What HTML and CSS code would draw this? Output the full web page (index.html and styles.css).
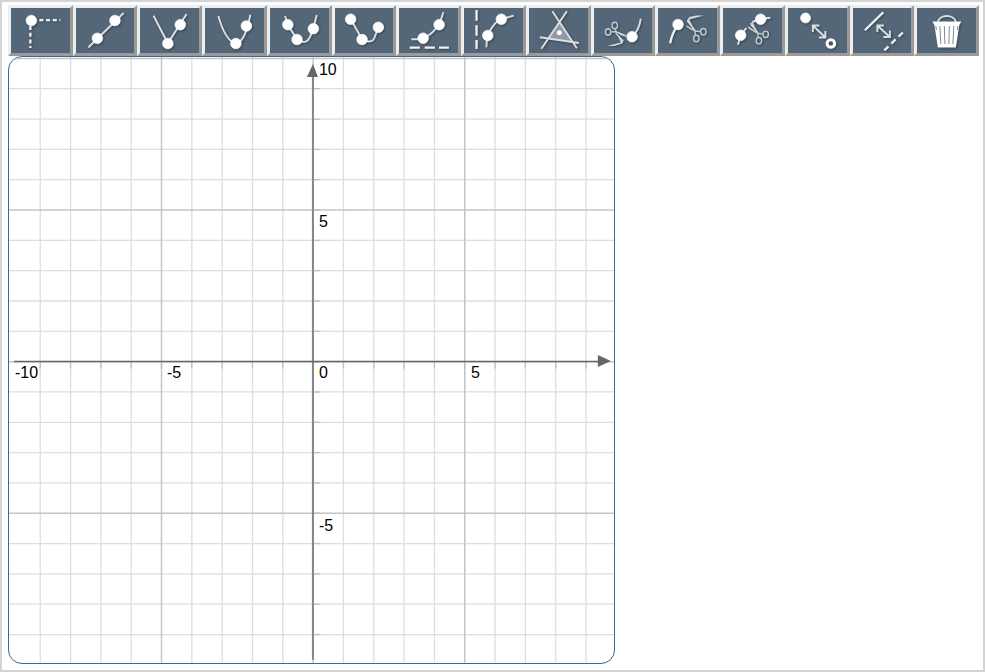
FILE: index.html
```
<!DOCTYPE html>
<html lang="en">
<head>
  <meta charset="UTF-8">
  <meta name="viewport" content="width=device-width, initial-scale=1.0">
  <title>Graph</title>
  <link rel="stylesheet" href="styles.css">
</head>
<body>
  <main class="frame">
    <div class="toolbar">
      <button type="button" aria-label="Point">
        <svg viewBox="0 0 58 45"><path class="thick" d="M28 12.2H49M19 18V40" stroke-dasharray="4 2.7"/><circle cx="20" cy="12.5" r="5.3"/></svg>
      </button>
      <button type="button" aria-label="Line">
        <svg viewBox="0 0 58 45"><path d="M12 39.5L47.3 5"/><circle cx="38.6" cy="12.5" r="5.3"/><circle cx="21" cy="30.3" r="5.3"/></svg>
      </button>
      <button type="button" aria-label="Absolute value">
        <svg viewBox="0 0 58 45"><path d="M13.2 7.7L27.5 35.3L46.2 6"/><circle cx="27.5" cy="35.5" r="5.3"/><circle cx="39.9" cy="16.7" r="5.3"/></svg>
      </button>
      <button type="button" aria-label="Parabola">
        <svg viewBox="0 0 58 45"><path d="M13 8C17 22 23 34 30.5 35.3C37 35 42 22 45 6.7"/><circle cx="30.5" cy="35.5" r="5.3"/><circle cx="41" cy="18" r="5.3"/></svg>
      </button>
      <button type="button" aria-label="Three point curve">
        <svg viewBox="0 0 58 45"><path d="M14.7 8L17.5 17L26.7 31.3C32 35 37 35 39 30C42 25 44 17 46.4 7"/><circle cx="17.5" cy="16.7" r="5.3"/><circle cx="26.7" cy="31.5" r="5.3"/><circle cx="43" cy="20.7" r="5.3"/></svg>
      </button>
      <button type="button" aria-label="Curve segment">
        <svg viewBox="0 0 58 45"><path d="M15.3 11L26.7 31.3C32 34 37 35 39 30L43 19.3"/><circle cx="15.3" cy="11.2" r="5.3"/><circle cx="26.7" cy="31.5" r="5.3"/><circle cx="43" cy="19.3" r="5.3"/></svg>
      </button>
      <button type="button" aria-label="Horizontal asymptote">
        <svg viewBox="0 0 58 45"><path d="M12 31.3H19L24 30C32 27 40 19 44 4.3"/><path class="thick" d="M10.3 39.7H20.6M25.3 39.7H35.6M39.6 39.7H49.6"/><circle cx="23.8" cy="30.2" r="5.3"/><circle cx="39.8" cy="16.7" r="5.3"/></svg>
      </button>
      <button type="button" aria-label="Vertical asymptote">
        <svg viewBox="0 0 58 45"><path d="M22 39.3C22 25 29 15 37 11L49.5 7.7"/><path class="thick" d="M12.2 2V12.7M12.2 17.3V27.7M12.2 32V41"/><circle cx="37" cy="11.2" r="5.3"/><circle cx="23.4" cy="27.5" r="5.3"/></svg>
      </button>
      <button type="button" aria-label="Shaded region">
        <svg viewBox="0 0 58 45"><path class="shade" d="M30 14L19 30.5L43 34Z"/><path d="M37.5 3.3L12 40.7M23 3.3L47.5 40.3M10.5 29.3L49.5 35"/><circle cx="30" cy="24.7" r="2.2"/></svg>
      </button>
      <button type="button" aria-label="Cut left">
        <svg viewBox="0 0 58 45"><path d="M37.7 28.7C42 25 45 20 46.4 10.7"/><circle cx="37.7" cy="28.7" r="5.3"/>
          <g class="scissors"><ellipse cx="13.7" cy="24" rx="2.7" ry="3.2"/><ellipse cx="20.4" cy="17.5" rx="2.7" ry="3.2"/><path d="M17 24L21 23.5L32 28M21 21L22 26L29 33"/><path class="blade" d="M21.5 23L28 26L32 29L26 27ZM22 25L29 33L28 35.5L20 38L12.5 38L26.5 34.5Z"/></g></svg>
      </button>
      <button type="button" aria-label="Cut right">
        <svg viewBox="0 0 58 45"><path class="thick" d="M19.7 16.3C15 23 13 29 11.7 35.3"/><circle cx="19.7" cy="16.5" r="5.3"/>
          <g class="scissors"><ellipse cx="38" cy="30.5" rx="2.7" ry="3.2"/><ellipse cx="45" cy="23.7" rx="2.7" ry="3.2"/><path d="M37 27L36.5 22L29 13M41.5 23.5L37 23L28 18"/><path class="blade" d="M37 24L35 22L28.5 12.5L31 9L38 7.5H45.5L31 11.5ZM36 24L30 20L28 17.5Z"/></g></svg>
      </button>
      <button type="button" aria-label="Cut middle">
        <svg viewBox="0 0 58 45"><path d="M14.6 36.7L17.3 27.3L23 20M29 14L37.3 11L47 9.7"/><circle cx="37.3" cy="11.2" r="5.3"/><circle cx="17.3" cy="27.3" r="5.3"/>
          <g class="scissors"><ellipse cx="35.5" cy="32.7" rx="2.7" ry="3.2"/><ellipse cx="42.3" cy="26.3" rx="2.7" ry="3.2"/><path d="M35 29L34 24L27 15M39 26L34 25L25 19"/><path class="blade" d="M35 26L27 17L29 13.5ZM34 26L26 21L24 18Z"/></g></svg>
      </button>
      <button type="button" aria-label="Open or closed point">
        <svg viewBox="0 0 58 45"><circle cx="17.2" cy="10" r="5"/><path d="M24.5 17.5L37 29.5M24.5 24V17.5H31M37 23V29.5H30.5"/><circle class="ring" cx="42.5" cy="35.5" r="3.8"/></svg>
      </button>
      <button type="button" aria-label="Solid or dashed line">
        <svg viewBox="0 0 58 45"><path class="thick" d="M11.5 22.3L30 4.3"/><path d="M24 17.5L36.5 29M24 24V17.5H30.5M36.5 22.5V29H30"/><path class="thick" d="M49.5 24.5L31 42.3" stroke-dasharray="6 4"/></svg>
      </button>
      <button type="button" aria-label="Delete">
        <svg viewBox="0 0 58 45"><path d="M20.5 14C22 6 37 6 38.5 14"/><path class="solid" d="M15 13.5H44L42 17L38.5 39.5H20.5L17 17Z"/><path class="slots" d="M22.5 18L23.5 36M27 18L27.5 36M32 18L31.5 36M36.5 18L35.5 36M18.5 18L19 22M40.5 18L40 22"/></svg>
      </button>
    </div>
    <div class="board">
      <svg class="graph" viewBox="0 0 605 606">
        <g class="grid"></g>
        <path class="axis" d="M304 20V603"/>
        <path class="axis x" d="M5 304.5H590"/>
        <path class="arrow" d="M298 20L304 7L309 20ZM589 298V310L602 304Z"/>
        <text x="6" y="321">-10</text>
        <text x="158" y="321">-5</text>
        <text x="310" y="321">0</text>
        <text x="462" y="321">5</text>
        <text x="310" y="18">10</text>
        <text x="310" y="170">5</text>
        <text x="310" y="474">-5</text>
      </svg>
    </div>
  </main>
  <script>
    const grid=document.querySelector('.grid')
    const originX=304.2
    const originY=304.7
    const unit=30.33

    function line(x1,y1,x2,y2,name){
      const el=document.createElementNS('http://www.w3.org/2000/svg','line')
      el.setAttribute('x1',x1)
      el.setAttribute('y1',y1)
      el.setAttribute('x2',x2)
      el.setAttribute('y2',y2)
      el.setAttribute('class',name)
      grid.appendChild(el)
    }

    // minor lines first so the major ones stay on top
    for(const major of [false,true]){
      for(let i=-10;i<=10;i++){
        if((i%5===0)!==major) continue
        const x=originX+i*unit
        const y=originY+i*unit
        const name=major?'major':'minor'
        // the left edge sits under the border
        if(i>-10) line(x,0,x,606,name)
        line(0,y,605,y,name)
      }
    }
    // ticks
    for(let i=-9;i<10;i++){
      const x=originX+i*unit
      const y=originY+i*unit
      line(x,originY,x,originY+7,'tick')
      line(originX,y,originX+7,y,'tick')
    }
  </script>
</body>
</html>
```
FILE: styles.css
```
*{
  box-sizing: border-box;
}

body{
  margin: 0;
  background: #fff;
  font-family: "Liberation Sans", Arial, sans-serif;
}

.frame{
  min-height: 100vh;
  padding: 3px 4px 6px 6px;
  border: 2px solid #d3d3d3;
}

.toolbar{
  display: flex;
}

.toolbar button{
  flex: 1;
  min-width: 0;
  height: 51px;
  padding: 0;
  border: 3px solid;
  border-color: #eee #9a9a9a #9a9a9a #eee;
  background: #546778;
  cursor: pointer;
}

.toolbar button:hover{
  background: #64788a;
}

.toolbar svg{
  display: block;
  width: 100%;
  height: 45px;
  fill: none;
  stroke: #dde0e3;
  stroke-width: 1.9;
  filter: drop-shadow(1px 1px 1px rgba(0, 0, 0, 0.35));
}

.toolbar circle{
  fill: #fff;
  stroke: #fff;
  stroke-width: 0.7;
}

.toolbar .thick{
  stroke: #f0f1f2;
  stroke-width: 2.3;
}

.toolbar .shade{
  fill: #8f9aa5;
  stroke: none;
}

.toolbar .ring{
  fill: none;
  stroke: #fff;
  stroke-width: 3;
}

.toolbar .solid{
  fill: #fff;
  stroke: none;
}

.toolbar .slots{
  stroke: #7d8b98;
  stroke-width: 1;
}

.scissors{
  stroke: #c3c9ce;
  stroke-width: 1.4;
}

.scissors .blade{
  fill: #d4d8db;
  stroke: none;
}

.board{
  width: 62.5%;
  border: 1px solid #36699c;
  border-radius: 14px;
  overflow: hidden;
}

.graph{
  display: block;
  width: 100%;
}

.graph text{
  font-size: 16px;
  fill: #000;
}

.minor{
  stroke: #dedede;
  stroke-width: 1.3;
}

.major{
  stroke: #c4c4c4;
  stroke-width: 1.5;
}

.tick{
  stroke: #c0c0c0;
  stroke-width: 1.3;
}

.axis{
  stroke: #858585;
  stroke-width: 2;
}

.axis.x{
  stroke: #666;
  stroke-width: 1.4;
}

.arrow{
  fill: #666;
}
```
